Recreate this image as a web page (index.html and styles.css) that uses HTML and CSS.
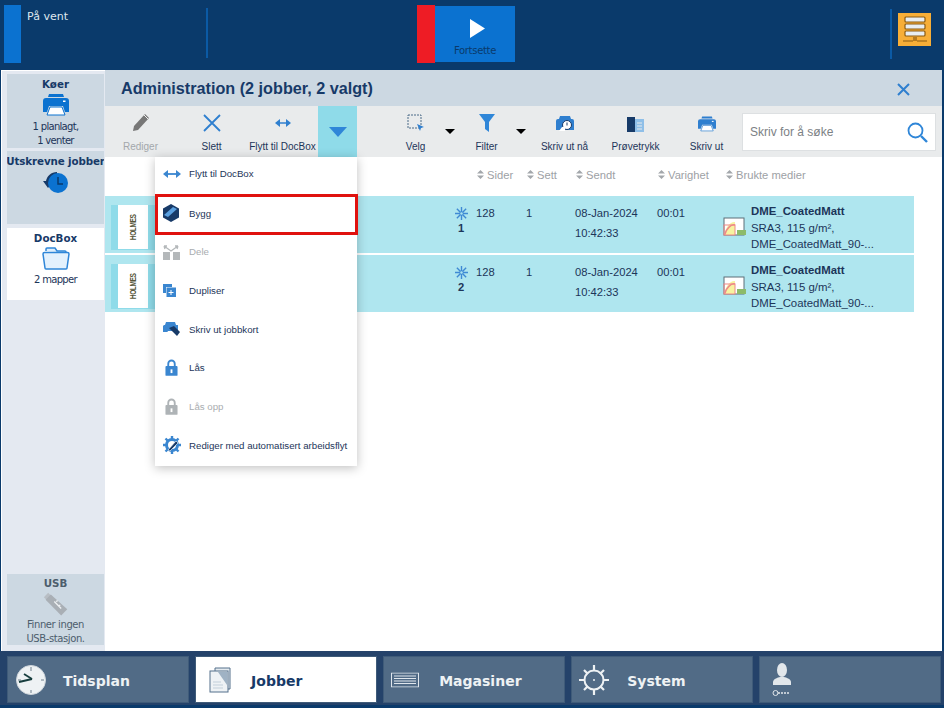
FILE: index.html
```html
<!DOCTYPE html>
<html lang="no">
<head>
<meta charset="utf-8">
<title>Administration</title>
<link rel="stylesheet" href="styles.css">
</head>
<body>
<svg class="defs" width="0" height="0" aria-hidden="true">
  <symbol id="printer" viewBox="0 0 26 22">
    <path d="M6 0h14l1 3H5z" fill="currentColor"/>
    <path d="M3 4h20a3 3 0 0 1 3 3v11h-4l-2-6H6l-2 6H0V7a3 3 0 0 1 3-3z" fill="currentColor"/>
    <path d="M7 13h12l3 8H4z" fill="#fff" stroke="currentColor"/>
    <rect x="20" y="6.500" width="2.500" height="1.500" fill="#fff"/>
  </symbol>
  <symbol id="sort" viewBox="0 0 7 9">
    <path d="M3.500 0L7 3.600H0zM3.500 9L0 5.400h7z" fill="#a3a7ab"/>
  </symbol>
  <symbol id="spark" viewBox="0 0 14 14">
    <g stroke="#3f8ad4" stroke-width="1.500" fill="none">
      <path d="M7 0v14M0 7h14M2 2l10 10M12 2L2 12"/>
    </g>
    <circle cx="7" cy="7" r="1.300" fill="#afe6ef"/>
  </symbol>
  <symbol id="media" viewBox="0 0 23 20">
    <rect x="1" y="1" width="20" height="17" fill="#fff" stroke="#5d6f78"/>
    <path d="M1.500 18C2 10 8 4 12 5v13z" fill="#f7f3a0"/>
    <path d="M1.500 18C3 12 8 7 12 8" fill="none" stroke="#e88" stroke-width="1.500"/>
    <rect x="1" y="8" width="11" height="10" fill="none" stroke="#e88"/>
    <rect x="14" y="13" width="9" height="5" fill="#8dbb6a"/>
  </symbol>
  <symbol id="lock" viewBox="0 0 14 18">
    <path d="M3.500 8V5a3.500 3.500 0 0 1 7 0v3" fill="none" stroke="currentColor" stroke-width="2"/>
    <rect x="0.500" y="7.500" width="13" height="10.500" rx="1" fill="currentColor"/>
    <rect x="6" y="11" width="2" height="4" fill="#fff"/>
  </symbol>
</svg>

<header class="topbar">
  <div class="status">
    <span class="status-chip"></span>
    <span class="status-text">På vent</span>
    <span class="vline"></span>
  </div>
  <div class="resume">
    <span class="resume-red"></span>
    <button class="resume-btn">
      <svg class="play" width="15" height="19" viewBox="0 0 15 19"><path d="M0 0l15 9.500L0 19z" fill="#fff"/></svg>
      <span>Fortsette</span>
    </button>
  </div>
  <div class="top-right">
    <span class="vline"></span>
    <span class="server">
      <svg width="26" height="28" viewBox="0 0 26 28">
        <g fill="#e8eef2" stroke="#8a5a12" stroke-width="1.200">
          <rect x="3" y="1" width="20" height="5" rx="1"/>
          <rect x="3" y="8" width="20" height="5" rx="1"/>
          <rect x="3" y="15" width="20" height="5" rx="1"/>
        </g>
        <path d="M1 25h10M15 25h10M12 21v4M14 21v4" stroke="#8a5a12" stroke-width="1.200" fill="none"/>
      </svg>
    </span>
  </div>
</header>

<div class="middle">
  <aside class="sidebar">
    <div class="card">
      <div class="card-title">Køer</div>
      <svg class="card-icon printer-big"><use href="#printer"/></svg>
      <div class="card-text">1 planlagt,<br>1 venter</div>
    </div>
    <div class="card card-tall">
      <div class="card-title"><span>Utskrevne jobber</span></div>
      <svg class="card-icon" width="26" height="24" viewBox="0 0 26 24">
        <path d="M14 2C8 2 4 6 3 11H0l5 7 6-7H8c1-3 3-5 6-5z" fill="#173a68"/>
        <circle cx="15" cy="13" r="10" fill="#0b72d0"/>
        <path d="M15 7v7h5" fill="none" stroke="#0a3a6b" stroke-width="1.500"/>
      </svg>
    </div>
    <div class="card card-white">
      <div class="card-title">DocBox</div>
      <svg class="card-icon" width="28" height="23" viewBox="0 0 28 23">
        <path d="M4 4V2a1 1 0 0 1 1-1h8l2 3h8a1 1 0 0 1 1 1v1" fill="#ddeefc" stroke="#2f86d8" stroke-width="1.500"/>
        <path d="M1 7a1.500 1.500 0 0 1 1.500-1.500h23A1.500 1.500 0 0 1 27 7l-2 14a1 1 0 0 1-1 1H4a1 1 0 0 1-1-1z" fill="#e3f1fd" stroke="#2f86d8" stroke-width="1.500"/>
      </svg>
      <div class="card-text card-text-low">2 mapper</div>
    </div>
    <div class="card card-usb">
      <div class="card-title usb-title">USB</div>
      <svg class="card-icon" width="26" height="26" viewBox="0 0 30 30">
        <path d="M6 1L1 6l5 5 5-5z" fill="#b8bec4"/>
        <path d="M9 3L3 9l18 18 7-7z" fill="#a9afb5"/>
        <path d="M13 11l8 8M15 11l2-1M18 16l2-1" stroke="#eef1f3" stroke-width="1.500" fill="none"/>
      </svg>
      <div class="card-text usb-text">Finner ingen<br>USB-stasjon.</div>
    </div>
  </aside>

  <main class="content">
    <div class="titlebar">
      <h1 class="title">Administration (2 jobber, 2 valgt)</h1>
      <svg class="close" width="13" height="13" viewBox="0 0 13 13"><path d="M1 1l11 11M12 1L1 12" stroke="#2f7fcf" stroke-width="2" fill="none"/></svg>
    </div>

    <div class="toolbar">
      <div class="tool is-disabled">
        <svg width="18" height="20" viewBox="0 0 18 20"><path d="M1 19l1-5L13 2l4 4L6 18z" fill="#777"/><path d="M12 3l4 4" stroke="#eee"/></svg>
        <span>Rediger</span>
      </div>
      <div class="tool">
        <svg width="18" height="18" viewBox="0 0 18 18"><path d="M1 1l16 16M17 1L1 17" stroke="#2f7fcf" stroke-width="1.800" fill="none"/></svg>
        <span>Slett</span>
      </div>
      <div class="tool">
        <svg width="16" height="18" viewBox="0 0 16 18"><path d="M3 9h10" stroke="#2f7fcf" stroke-width="1.500"/><path d="M0 9l5-4v8zM16 9l-5-4v8z" fill="#2f7fcf"/></svg>
        <span>Flytt til DocBox</span>
      </div>
      <div class="tool-more">
        <svg width="18" height="10" viewBox="0 0 18 10"><path d="M0 0h18L9 10z" fill="#2f86d8"/></svg>
      </div>
      <div class="tool tool-sel">
        <svg width="18" height="18" viewBox="0 0 18 18"><rect x="1" y="1" width="13" height="13" fill="none" stroke="#4a6a88" stroke-dasharray="2 1"/><path d="M10 10l7 3-3 1-1 3z" fill="#2f7fcf"/></svg>
        <span>Velg</span>
        <i class="caret"></i>
      </div>
      <div class="tool tool-sel">
        <svg width="16" height="18" viewBox="0 0 16 18"><path d="M0 0h16L10 8v10l-4-3V8z" fill="#2f86d8"/></svg>
        <span>Filter</span>
        <i class="caret"></i>
      </div>
      <div class="tool tool-after">
        <svg width="18" height="16" viewBox="0 0 18 16"><path d="M4 0h10l1 3H3z" fill="#2f7fcf"/><path d="M2 3h14a2 2 0 0 1 2 2v9H0V5a2 2 0 0 1 2-2z" fill="#2f7fcf"/><circle cx="11" cy="9" r="4.500" fill="#fff" stroke="#173a68"/><path d="M11 6.500v3" stroke="#173a68"/><path d="M3 15l3-4h3v4z" fill="#fff"/></svg>
        <span>Skriv ut nå</span>
      </div>
      <div class="tool">
        <svg width="17" height="16" viewBox="0 0 17 16"><path d="M0 1l8 0v15H0z" fill="#173a68"/><path d="M8 3h9v13H8z" fill="#8fbfe8"/><path d="M10 7h5M10 10h5M10 13h5" stroke="#e9ebec"/></svg>
        <span>Prøvetrykk</span>
      </div>
      <div class="tool">
        <svg class="tool-printer"><use href="#printer"/></svg>
        <span>Skriv ut</span>
      </div>
      <div class="search">
        <span>Skriv for å søke</span>
        <svg width="21" height="21" viewBox="0 0 21 21"><circle cx="8.500" cy="8.500" r="7" fill="none" stroke="#2f86d8" stroke-width="1.800"/><path d="M14 14l6 6" stroke="#2f86d8" stroke-width="2.400"/></svg>
      </div>
    </div>

    <div class="grid-row head">
      <span></span><span></span>
      <span class="hcell"><svg class="sort"><use href="#sort"/></svg>Sider</span>
      <span class="hcell"><svg class="sort"><use href="#sort"/></svg>Sett</span>
      <span class="hcell"><svg class="sort"><use href="#sort"/></svg>Sendt</span>
      <span class="hcell"><svg class="sort"><use href="#sort"/></svg>Varighet</span>
      <span class="hcell hspan"><svg class="sort"><use href="#sort"/></svg>Brukte medier</span>
    </div>

    <div class="grid-row job">
      <div class="thumb"><div class="page"><span>HOLMES</span></div></div>
      <div class="state"><svg class="spark"><use href="#spark"/></svg><b>1</b></div>
      <div class="cell">128</div>
      <div class="cell">1</div>
      <div class="cell">08-Jan-2024<br>10:42:33</div>
      <div class="cell">00:01</div>
      <svg class="media-icon"><use href="#media"/></svg>
      <div class="media"><b>DME_CoatedMatt</b><br>SRA3, 115 g/m²,<br>DME_CoatedMatt_90-...</div>
    </div>
    <div class="grid-row job">
      <div class="thumb"><div class="page"><span>HOLMES</span></div></div>
      <div class="state"><svg class="spark"><use href="#spark"/></svg><b>2</b></div>
      <div class="cell">128</div>
      <div class="cell">1</div>
      <div class="cell">08-Jan-2024<br>10:42:33</div>
      <div class="cell">00:01</div>
      <svg class="media-icon"><use href="#media"/></svg>
      <div class="media"><b>DME_CoatedMatt</b><br>SRA3, 115 g/m²,<br>DME_CoatedMatt_90-...</div>
    </div>

    <ul class="menu">
      <li class="menu-item">
        <svg width="18" height="10" viewBox="0 0 18 10"><path d="M3 5h12" stroke="#3a86d0" stroke-width="1.800"/><path d="M0 5l5-4v8zM18 5l-5-4v8z" fill="#3a86d0"/></svg>
        <span>Flytt til DocBox</span>
      </li>
      <li class="menu-item is-marked">
        <svg width="16" height="18" viewBox="0 0 16 18"><path d="M8 0l8 4.500v9L8 18l-8-4.500v-9z" fill="#173a68"/><path d="M1 11L10 3l4 2-9 8z" fill="#5aa0e0"/></svg>
        <span>Bygg</span>
      </li>
      <li class="menu-item is-off">
        <svg width="17" height="16" viewBox="0 0 17 16"><path d="M0 8h7v8H0zM10 8h7v8h-7z" fill="#b4b8ba"/><path d="M1 2l7 5 7-5M1 2l3 0M1 2l1 3M15 2l-3 0M15 2l-1 3" fill="none" stroke="#b4b8ba" stroke-width="1.300"/></svg>
        <span>Dele</span>
      </li>
      <li class="menu-item">
        <svg width="13" height="13" viewBox="0 0 13 13"><path d="M0 0h9v3H3v6H0z" fill="#3a86d0"/><rect x="3.500" y="3.500" width="9.500" height="9.500" fill="#3a86d0"/><path d="M8 6v5M5.500 8.500h5" stroke="#fff"/></svg>
        <span>Dupliser</span>
      </li>
      <li class="menu-item">
        <svg width="17" height="15" viewBox="0 0 17 15"><path d="M3 0h9l1 3H2z" fill="#3a86d0"/><path d="M1 3h14v7H0V4z" fill="#3a86d0"/><path d="M2 14l3-5h6v5z" fill="#fff"/><path d="M6 6l5-2 6 6-3 4z" fill="#173a68"/></svg>
        <span>Skriv ut jobbkort</span>
      </li>
      <li class="menu-item">
        <svg class="lock"><use href="#lock"/></svg>
        <span>Lås</span>
      </li>
      <li class="menu-item is-off">
        <svg class="lock"><use href="#lock"/></svg>
        <span>Lås opp</span>
      </li>
      <li class="menu-item">
        <svg width="18" height="18" viewBox="0 0 18 18"><circle cx="9" cy="9" r="5.500" fill="none" stroke="#3a86d0" stroke-width="3"/><path d="M9 0v3M9 15v3M0 9h3M15 9h3M2.500 2.500l2 2M13.500 13.500l2 2M15.500 2.500l-2 2M4.500 13.500l-2 2" stroke="#3a86d0" stroke-width="2.400"/><path d="M5 14L13 5l2 2-8 8z" fill="#173a68" stroke="#fff" stroke-width=".6"/></svg>
        <span>Rediger med automatisert arbeidsflyt</span>
      </li>
    </ul>
  </main>
</div>

<nav class="bottom">
  <a class="nav">
    <svg class="nav-ico" width="32" height="32" viewBox="0 0 32 32"><circle cx="16" cy="16" r="14.500" fill="#eef2f4" stroke="#cfd6dc"/><path d="M16 3v4M16 26v3M3 16h3M26 16h3" stroke="#6f7f8c"/><path d="M17 15L4 18" fill="none" stroke="#173e3e" stroke-width="2"/><path d="M17 15L9 10" stroke="#173e3e" stroke-width="1.800"/></svg>
    <span>Tidsplan</span>
  </a>
  <a class="nav nav-on">
    <svg class="nav-ico" width="22" height="26" viewBox="0 0 22 26"><path d="M6 1h15v21H6z" fill="#e4eaef" stroke="#54708c"/><rect x="1" y="4" width="18" height="21" fill="#eef2f5" stroke="#54708c"/><path d="M9 5h9v13z" fill="#9fb2c4"/><path d="M4 15h8M4 18h10M4 21h10" stroke="#c2cfda"/></svg>
    <span>Jobber</span>
  </a>
  <a class="nav">
    <svg class="nav-ico" width="28" height="15" viewBox="0 0 28 15"><rect x=".5" y=".5" width="27" height="14" fill="none" stroke="#dfe6ec"/><path d="M3 3.500h22M3 6h22M3 8.500h22M3 11h22" stroke="#dfe6ec"/></svg>
    <span>Magasiner</span>
  </a>
  <a class="nav">
    <svg class="nav-ico" width="30" height="32" viewBox="0 0 30 32"><circle cx="15" cy="16" r="9.500" fill="none" stroke="#eef2f4" stroke-width="2"/><circle cx="15" cy="16" r="1" fill="#eef2f4"/><path d="M15 1v6M15 25v6M0 16h6M24 16h6M5 6l4 4M25 6l-4 4M5 26l4-4M25 26l-4-4" stroke="#eef2f4" stroke-width="2.200"/></svg>
    <span>System</span>
  </a>
  <a class="nav">
    <svg class="nav-ico user" width="20" height="34" viewBox="0 0 20 34"><ellipse cx="10" cy="7" rx="5" ry="7" fill="#e2e7eb"/><path d="M1 22v-3c0-3 5-5 9-5s9 2 9 5v3z" fill="#e2e7eb"/><circle cx="3.500" cy="30" r="2.500" fill="none" stroke="#e2e7eb"/><path d="M6 30h12" stroke="#e2e7eb" stroke-dasharray="2 1" stroke-width="1.500"/></svg>
  </a>
</nav>
</body>
</html>
```

FILE: styles.css
```css
* { box-sizing: border-box; }
html, body { margin: 0; height: 100%; }
body {
  width: 944px;
  height: 708px;
  background: #0a3a6b;
  display: flex;
  flex-direction: column;
  overflow: hidden;
  font-family: "Liberation Sans", Arial, sans-serif;
  color: #1c3559;
}
.defs { position: absolute; }

/* top bar */
.topbar { height: 70px; display: flex; flex: none; }
.status { width: 417px; display: flex; padding: 5px 0 7px 4px; }
.status-chip { width: 17px; background: #0b72d0; }
.status-text {
  width: 179px;
  margin-left: 6px;
  font: 11px "DejaVu Sans", sans-serif;
  color: #dfe7ee;
  padding-top: 5px;
}
.vline { width: 2px; margin: 3px 0 5px; background: #0b5aa5; }
.resume { display: flex; width: 473px; padding: 5px 0 7px; }
.resume-red { width: 18px; background: #ee1c25; }
.resume-btn {
  width: 80px;
  margin: 1px 0;
  border: 0;
  padding: 13px 0 0;
  background: #0b72d0;
  display: flex;
  flex-direction: column;
  align-items: center;
  gap: 7px;
  font: 10px "DejaVu Sans", sans-serif;
  letter-spacing: -0.3px;
  color: #0a3a6b;
}
.play { margin-left: 4px; }
.top-right { display: flex; gap: 6px; padding-top: 6px; height: 64px; }
.top-right .vline { margin: 3px 0 5px; }
.server {
  width: 33px;
  height: 33px;
  margin-top: 7px;
  background: #f7ae37;
  display: flex;
  justify-content: center;
  align-items: center;
}

/* middle */
.middle {
  flex: 1;
  display: flex;
  margin: 0 2px 0 1px;
  min-height: 0;
}
.sidebar {
  width: 104px;
  background: #e4e9f1;
  border-top: 1px solid #fff;
  border-left: 1px solid #fff;
  padding: 3px 1px 6px 5px;
  display: flex;
  flex-direction: column;
  gap: 3px;
  flex: none;
}
.card {
  height: 74px;
  background: #ccd8e2;
  display: flex;
  flex-direction: column;
  align-items: center;
  overflow: hidden;
  flex: none;
}
.card-tall { height: 73px; margin-bottom: 1px; }
.card-white { height: 72px; background: #fff; }
.card-usb { height: 71px; margin-top: auto; }
.card-title {
  font: bold 10.300px/13px "DejaVu Sans", sans-serif;
  color: #173a68;
  margin-top: 4px;
  white-space: nowrap;
  display: flex;
  justify-content: center;
  width: 100%;
}
.card-title span { flex: none; letter-spacing: -0.12px; }
.card-icon { margin-top: 2px; flex: none; }
.printer-big { width: 26px; height: 22px; color: #0b72d0; margin-top: 3px; }
.card-text {
  font: 10px/14px "DejaVu Sans", sans-serif;
  letter-spacing: -0.7px;
  text-align: center;
  color: #1c3559;
  margin-top: 4px;
}
.card-text-low { margin-top: 3px; }
.usb-title { color: #4d5d6c; margin-top: 3px; }
.usb-text { color: #4d5d6c; margin-top: 0; letter-spacing: -0.4px; }

/* content */
.content { flex: 1; background: #fff; position: relative; min-width: 0; }
.titlebar {
  height: 36px;
  background: #ccd8e2;
  display: flex;
  align-items: center;
  justify-content: space-between;
  padding: 0 32px 0 16px;
}
.title { margin: 0; font: bold 16.200px "Liberation Sans", sans-serif; color: #173a68; }
.close { display: block; margin-top: 2px; }
.toolbar { height: 51px; background: #e9ebec; display: flex; }
.tool {
  width: 71px;
  flex: none;
  position: relative;
  display: flex;
  flex-direction: column;
  align-items: center;
  justify-content: flex-end;
  padding-bottom: 4px;
  font-size: 10px;
  line-height: 12px;
  white-space: nowrap;
  color: #1c3559;
}
.tool svg { margin-bottom: 9px; }
.is-disabled { color: #a3a7ab; }
.tool-more {
  width: 39px;
  flex: none;
  background: #8fdbe9;
  display: flex;
  justify-content: center;
  align-items: center;
}
.tool-more + .tool-sel { margin-left: 23px; }
.tool-after { margin-left: 7px; }
.caret {
  position: absolute;
  right: -4px;
  top: 23px;
  border: 5px solid transparent;
  border-top: 5px solid #000;
  border-bottom: 0;
}
.tool-printer { width: 18px; height: 16px; color: #2f7fcf; }
.search {
  width: 194px;
  height: 38px;
  margin: 7px 0 0;
  background: #fff;
  border: 1px solid #dde0e2;
  display: flex;
  align-items: center;
  justify-content: space-between;
  padding: 0 7px;
  font-size: 12px;
  color: #7c8185;
  flex: none;
}

/* table */
.grid-row {
  display: grid;
  grid-template-columns: 345px 26px 50px 49px 82px 66px 28px 159px;
  width: 809px;
}
.head { height: 39px; align-items: center; background: #fff; padding-bottom: 4px; }
.hcell {
  font-size: 11.200px;
  color: #9da1a5;
  display: flex;
  align-items: center;
  gap: 3px;
  white-space: nowrap;
  padding-left: 1px;
}
.hspan { grid-column: 7 / 9; padding-left: 3px; }
.sort { width: 7px; height: 9px; }
.job {
  height: 57px;
  margin-bottom: 2px;
  background: #afe6ef;
  font-size: 11.200px;
  color: #1c3559;
}
.thumb {
  width: 44px;
  height: 45px;
  margin: 9px 0 0 6px;
  background: #8fdbe9;
  display: flex;
  justify-content: center;
}
.page {
  width: 30px;
  height: 44px;
  background: #fff;
  display: flex;
  align-items: center;
  justify-content: center;
}
.page span {
  writing-mode: vertical-rl;
  transform: rotate(180deg) scaleY(.78);
  font: bold 8.500px "Liberation Sans", sans-serif;
  letter-spacing: -0.6px;
  color: #55553a;
}
.state { display: flex; flex-direction: column; align-items: center; width: 22px; padding-top: 11px; line-height: 12px; gap: 2px; }
.spark { width: 13px; height: 13px; flex: none; }
.cell { padding-top: 8px; line-height: 19.500px; }
.media-icon { width: 23px; height: 20px; margin-top: 21px; }
.media { padding-top: 7px; line-height: 16.500px; white-space: nowrap; font-size: 11.400px; }

/* menu */
.menu {
  position: absolute;
  left: 50px;
  top: 87px;
  width: 202px;
  margin: 0;
  padding: 0 0 1.500px;
  list-style: none;
  background: #fff;
  box-shadow: 0 2px 10px rgba(0, 0, 0, .25);
}
.menu-item {
  height: 38.700px;
  display: flex;
  align-items: center;
  position: relative;
  font-size: 9.700px;
  color: #1c3559;
}
.menu-item:first-child { height: 36.700px; padding-bottom: 3.600px; }
.menu-item svg { position: absolute; left: 8px; }
.menu-item:first-child svg { top: 12px; }
.menu-item span { margin-left: 34px; white-space: nowrap; }
.menu-item .lock { width: 13px; height: 17px; color: #3a86d0; left: 10px; }
.is-off { color: #a9adb0; }
.is-off .lock { color: #aeb3b6; }
.is-marked::after {
  content: "";
  position: absolute;
  left: 0;
  right: -1px;
  top: 0;
  bottom: -3px;
  border: 3px solid #e0120f;
}

/* bottom nav */
.bottom {
  height: 57px;
  flex: none;
  display: flex;
  gap: 6.500px;
  padding: 5px 3px 5px 7px;
  background: linear-gradient(#24426a 0 54px, #0a3a6b 54px);
}
.nav {
  flex: 1;
  background: #516b86;
  border: 1px solid #3f5b79;
  display: flex;
  align-items: center;
  font: bold 14px "DejaVu Sans", sans-serif;
  color: #eef2f4;
  position: relative;
  padding: 2px 0 0 55px;
}
.nav-ico { position: absolute; left: 7px; top: 50%; transform: translateY(-50%); }
.nav-on { background: #fff; color: #173a68; }
.nav-on .nav-ico { left: 13px; }
.user { left: 12px; }
```
